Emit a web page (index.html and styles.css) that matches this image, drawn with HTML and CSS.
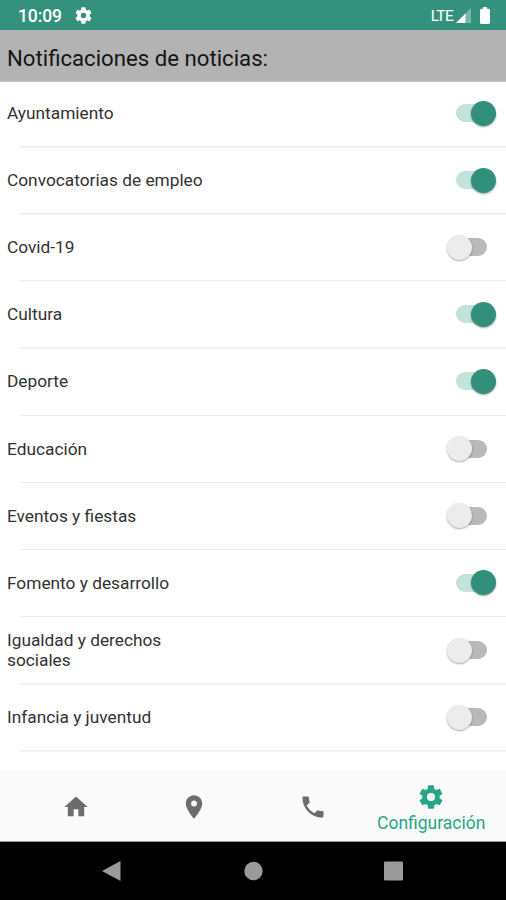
FILE: index.html
```
<!DOCTYPE html>
<html lang="es">
<head>
<meta charset="utf-8">
<title>Configuración</title>
<link rel="stylesheet" href="styles.css">
</head>
<body>
<div class="screen">
  <header class="status">
    <span class="clock">10:09</span>
    <svg class="status-gear" viewBox="2 2 20 20"><path d="M19.14 12.94c.04-.3.06-.61.06-.94s-.02-.64-.07-.94l2.03-1.58c.18-.14.23-.41.12-.61l-1.92-3.32c-.12-.22-.37-.29-.59-.22l-2.39.96c-.5-.38-1.03-.7-1.62-.94l-.36-2.54A.48.48 0 0 0 13.920 2.400h-3.840c-.24 0-.43.17-.47.41l-.36 2.540c-.59.24-1.130.57-1.620.94l-2.390-.96c-.22-.08-.47 0-.59.22L2.740 8.870c-.12.21-.08.47.12.61l2.030 1.580c-.05.3-.09.63-.09.94s.02.64.07.94l-2.030 1.580c-.18.14-.23.41-.12.61l1.920 3.320c.12.22.37.29.59.22l2.390-.96c.5.38 1.030.7 1.620.94l.36 2.540c.05.24.24.41.48.41h3.840c.24 0 .44-.17.47-.41l.36-2.540c.59-.24 1.130-.56 1.620-.94l2.390.96c.22.08.47 0 .59-.22l1.920-3.320c.12-.22.07-.47-.12-.61zM12 15.200a3.200 3.200 0 1 1 0-6.400 3.200 3.200 0 0 1 0 6.400z"/></svg>
    <span class="network">LTE</span>
    <svg class="signal" viewBox="0 0 15 15"><path opacity=".35" d="M15 0v15H0z"/><path d="M9.500 5.500V15H0z"/></svg>
    <svg class="battery" viewBox="0 0 10 17"><path d="M3 0h4v1.700h1.500A1.500 1.500 0 0 1 10 3.200v12.300a1.500 1.500 0 0 1-1.500 1.500h-7A1.500 1.500 0 0 1 0 15.500V3.200a1.500 1.500 0 0 1 1.500-1.500H3z"/></svg>
  </header>
  <h1 class="title">Notificaciones de noticias:</h1>
  <main class="list">
    <div class="row"><span class="label">Ayuntamiento</span><span class="switch on"></span></div>
    <div class="row"><span class="label">Convocatorias de empleo</span><span class="switch on"></span></div>
    <div class="row"><span class="label">Covid-19</span><span class="switch"></span></div>
    <div class="row"><span class="label">Cultura</span><span class="switch on"></span></div>
    <div class="row"><span class="label">Deporte</span><span class="switch on"></span></div>
    <div class="row"><span class="label">Educación</span><span class="switch"></span></div>
    <div class="row"><span class="label">Eventos y fiestas</span><span class="switch"></span></div>
    <div class="row"><span class="label">Fomento y desarrollo</span><span class="switch on"></span></div>
    <div class="row"><span class="label">Igualdad y derechos<br>sociales</span><span class="switch"></span></div>
    <div class="row"><span class="label">Infancia y juventud</span><span class="switch"></span></div>
  </main>
  <nav class="tabs">
    <a class="tab"><svg viewBox="0 0 24 24"><path d="M10 20v-6h4v6h5v-8h3L12 3 2 12h3v8z"/></svg></a>
    <a class="tab"><svg viewBox="0 0 24 24"><path d="M12 2C8.130 2 5 5.130 5 9c0 5.250 7 13 7 13s7-7.750 7-13c0-3.870-3.130-7-7-7zm0 9.500a2.500 2.500 0 1 1 0-5 2.500 2.500 0 0 1 0 5z"/></svg></a>
    <a class="tab"><svg viewBox="0 0 24 24"><path d="M20 15.500c-1.250 0-2.450-.2-3.570-.57-.1-.03-.21-.05-.31-.05-.26 0-.51.1-.71.29l-2.200 2.200c-2.830-1.440-5.150-3.750-6.590-6.590l2.200-2.200c.28-.28.36-.67.25-1.020C8.700 6.450 8.500 5.250 8.500 4c0-.55-.45-1-1-1H4c-.55 0-1 .45-1 1 0 9.390 7.610 17 17 17 .55 0 1-.45 1-1v-3.500c0-.55-.45-1-1-1z"/></svg></a>
    <a class="tab active"><svg viewBox="0 0 24 24"><path d="M19.430 12.980c.04-.32.070-.64.070-.98s-.03-.66-.07-.98l2.110-1.650c.19-.15.24-.42.12-.64l-2-3.460c-.12-.22-.39-.3-.61-.22l-2.490 1c-.52-.4-1.080-.73-1.690-.98l-.38-2.650A.49.49 0 0 0 14 2h-4c-.25 0-.46.18-.49.42l-.38 2.650c-.61.25-1.170.59-1.690.98l-2.490-1c-.23-.09-.49 0-.61.22l-2 3.460c-.13.22-.07.49.12.64l2.110 1.650c-.04.32-.07.65-.07.98s.03.66.07.98l-2.110 1.650c-.19.15-.24.42-.12.64l2 3.460c.12.22.39.3.61.22l2.490-1c.52.4 1.080.73 1.690.98l.38 2.650c.03.24.24.42.49.42h4c.25 0 .46-.18.49-.42l.38-2.650c.61-.25 1.170-.59 1.690-.98l2.490 1c.23.09.49 0 .61-.22l2-3.460c.12-.22.07-.49-.12-.64zM12 15.500a3.500 3.500 0 1 1 0-7 3.500 3.500 0 0 1 0 7z"/></svg><span>Configuración</span></a>
  </nav>
  <footer class="system">
    <svg viewBox="0 0 20 22"><path d="M18.500 1v20L0 11z"/></svg>
    <svg viewBox="0 0 20 22"><circle cx="10.500" cy="11" r="9.200"/></svg>
    <svg viewBox="0 0 20 22"><rect y="1.500" width="19" height="19" rx="1"/></svg>
  </footer>
</div>
</body>
</html>
```
FILE: styles.css
```
* { box-sizing: border-box; }
body { margin: 0; font-family: Roboto, "Liberation Sans", sans-serif; background: #fff; }
svg { display: block; fill: currentColor; flex: none; }
.screen { height: 900px; display: flex; flex-direction: column; overflow: hidden; }

.status { height: 30px; flex: none; display: flex; align-items: center; padding: 1px 16px 0 18px; background: #33917d; color: #fff; }
.clock { font-size: 17.5px; font-weight: 500; letter-spacing: -.1px; }
.status-gear { width: 17px; height: 17px; margin-left: 13.500px; }
.network { margin-left: auto; font-size: 15.5px; letter-spacing: -.7px; }
.signal { width: 15px; height: 15px; margin-left: 3px; margin-right: 1px; }
.battery { width: 10px; height: 17px; margin-left: 8px; }

.title { height: 52px; flex: none; margin: 0; padding: 3px 7px 0; background: #b3b3b3; color: #151515; font-size: 22.200px; line-height: 51px; font-weight: 400; border-bottom: 1px solid #c6c6c6; }

.list { flex: 1; min-height: 0; }
.row { height: 67.150px; display: flex; align-items: center; justify-content: space-between; padding: 0 9px 2px 7px; background: linear-gradient(#ededed, #ededed) 20px 100% / 100% 1.500px no-repeat; }
.row:first-child { height: 65.500px; padding-bottom: 3px; }
.label { font-size: 17.300px; line-height: 20px; color: #333; }

.switch { position: relative; width: 51px; height: 26px; }
.switch::before { content: ""; position: absolute; left: 8px; top: 4px; width: 33px; height: 18px; border-radius: 9px; background: #b9b9b9; }
.switch::after { content: ""; position: absolute; left: .500px; top: .5px; width: 25px; height: 25px; border-radius: 50%; background: #ececec; box-shadow: 0 1px 2px rgba(0, 0, 0, .35); }
.switch.on::before { left: 10px; background: #c2e3d9; }
.switch.on::after { left: 25px; background: #30907b; }

.tabs { height: 72px; flex: none; display: grid; grid-template-columns: repeat(4, 118.500px); justify-content: center; padding-left: 1px; background: #fafafa; color: #6c6c6c; border-bottom: 1px solid #999; }
.tab { display: flex; flex-direction: column; align-items: center; justify-content: center; padding-top: 2px; }
.tab svg { width: 28px; height: 28px; }
.active { color: #26a688; padding-top: 4px; }
.active span { font-size: 17.500px; line-height: 20px; margin-top: 2px; }

.system { height: 58px; flex: none; display: flex; justify-content: center; gap: 121px; padding-top: 18px; background: #000; color: #9a9a9a; }
.system svg { width: 20px; height: 22px; }
```
